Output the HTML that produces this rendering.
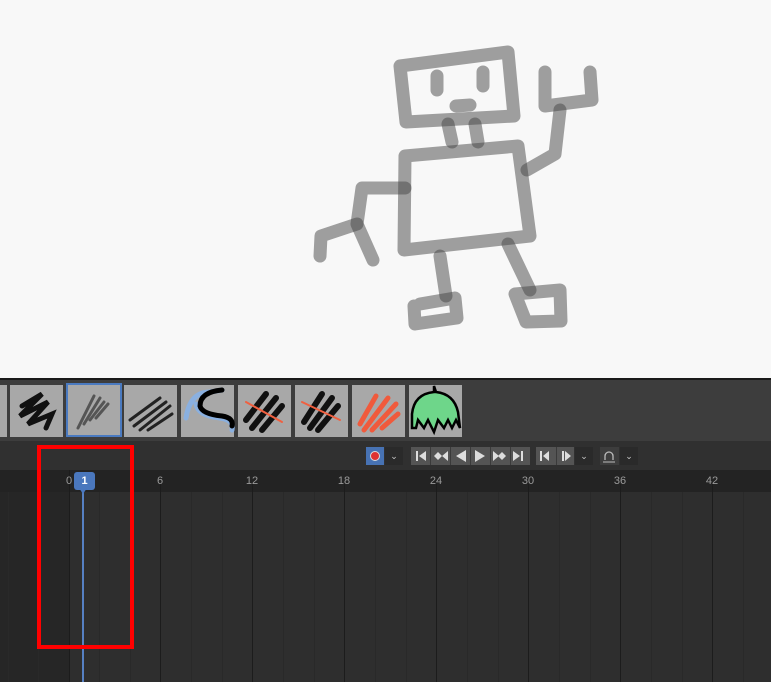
<!DOCTYPE html>
<html><head><style>
body{margin:0;width:771px;height:682px;overflow:hidden;background:#f8f8f8;font-family:"Liberation Sans","DejaVu Sans",sans-serif;position:relative}
.a{position:absolute}
.tile{position:absolute;top:385px;width:53px;height:52px;background:#a8a8a8}
.c{position:absolute;top:447px;height:18px;background:#545454}
.dd{position:absolute;top:447px;height:18px;width:18px;background:#2a2a2a;color:#ccc;font-size:9px;text-align:center;line-height:18px}
.num{position:absolute;top:475px;color:#9a9a9a;font-size:11px;transform:translateX(-50%)}
</style></head><body>
<svg class="a" style="left:0;top:0" width="771" height="380">
<g fill="none" stroke="#444" stroke-opacity="0.5" stroke-width="13" stroke-linecap="round" stroke-linejoin="round">
<path d="M400 66 L508 52 L514 116 L406 122 Z"/>
<path d="M437 76 L437 90 M483 72 L483 86 M456 106 L470 105"/>
<path d="M448 124 L452 142 M475 124 L478 142"/>
<path d="M405 156 L518 146 L530 236 L404 250 Z"/>
<path d="M527 170 L555 154 L560 110"/>
<path d="M545 72 L545 106 L592 100 L590 72"/>
<path d="M405 188 L362 188 L357 224 L373 260"/>
<path d="M357 224 L321 236 L320 256"/>
<path d="M440 256 L446 296"/>
<path d="M414 306 L415 324 L457 318 L455 298 L420 304"/>
<path d="M508 244 L530 290"/>
<path d="M515 294 L560 290 L561 321 L526 322 Z"/>
</g></svg>
<div class="a" style="left:0;top:378px;width:771px;height:2px;background:#1a1a1a"></div>
<div class="a" style="left:0;top:380px;width:771px;height:61px;background:#3d3d3d"></div>
<div class="tile" style="left:0;width:7px"></div>
<div class="tile" style="left:10px"></div>
<div class="tile" style="left:66px;width:52px;height:50px;border:2px solid #4a7ac0;top:383px"></div>
<div class="tile" style="left:124px"></div>
<div class="tile" style="left:181px"></div>
<div class="tile" style="left:238px"></div>
<div class="tile" style="left:295px"></div>
<div class="tile" style="left:352px"></div>
<div class="tile" style="left:409px"></div>
<svg class="a" style="left:0;top:384px" width="470" height="54">
<g fill="none" stroke-linecap="round">
<path d="M22 22 L42 10 L20 32 L48 18 L28 40 L52 30 L46 44" stroke="#111" stroke-width="5"/>
<path d="M78 44 L94 12 M84 40 L100 14 M90 36 L104 18 M96 34 L108 20" stroke="#555" stroke-width="3"/>
<path d="M130 36 L160 14 M134 42 L166 18 M140 46 L170 22 M148 46 L172 30" stroke="#222" stroke-width="3"/>
<path d="M186 34 Q190 8 210 8 L222 6" stroke="#8ab0e0" stroke-width="5"/>
<path d="M196 20 Q198 32 220 34 Q234 36 232 46" stroke="#8ab0e0" stroke-width="5"/>
<path d="M222 6 Q200 8 200 22 Q202 30 222 32 Q234 34 232 42" stroke="#000" stroke-width="5"/>
<path d="M246 36 L266 10 M252 44 L276 14 M262 46 L282 22" stroke="#111" stroke-width="6"/>
<path d="M246 18 L282 38" stroke="#f06040" stroke-width="2"/>
<path d="M304 38 L322 10 M310 44 L332 14 M318 46 L338 22" stroke="#111" stroke-width="6"/>
<path d="M302 18 L340 36" stroke="#f06040" stroke-width="2"/>
<path d="M360 40 L376 12 M364 46 L388 14 M372 46 L396 20 M382 44 L398 30" stroke="#f05a3c" stroke-width="5"/>
</g>
<path d="M434 2 L434 8 Q414 10 412 30 L412 44 L416 44 L418 36 L424 44 L428 36 L434 48 L438 36 L444 44 L448 36 L452 44 L456 36 L460 44 L458 28 Q454 10 436 8 Z" fill="#6ed68a" stroke="#000" stroke-width="2.5"/>
</svg>
<div class="a" style="left:0;top:441px;width:771px;height:29px;background:#303030"></div>
<div class="c" style="left:366px;width:18px;background:#4772b3"><span style="position:absolute;left:4px;top:4px;width:8px;height:8px;border-radius:50%;background:#d33;border:1px solid #ddd"></span></div>
<div class="dd" style="left:385px">⌄</div>
<div class="c" style="left:411px;width:119px"></div>
<div class="c" style="left:536px;width:38px"></div>
<div class="dd" style="left:575px">⌄</div>
<div class="c" style="left:600px;width:19px;background:#3d3d3d"></div>
<div class="dd" style="left:620px">⌄</div>
<svg class="a" style="left:360px;top:447px" width="290" height="18" fill="#ddd">
<path d="M71 9.5v0" stroke="#3a3a3a"/>
<g stroke="#3a3a3a" stroke-width="1"><path d="M70.5 0V18M90.5 0V18M110.5 0V18M130.5 0V18M150.5 0V18M196.5 0V18"/></g>
<rect x="56" y="4" width="2" height="10"/><path d="M66 4L59 9L66 14Z"/>
<path d="M74 9L78 5L82 9L78 13Z"/><path d="M88 4L82 9L88 14Z"/>
<path d="M106 3L96 9L106 15Z"/>
<path d="M115 3L125 9L115 15Z"/>
<path d="M133 4L139 9L133 14Z"/><path d="M138 9L142 5L146 9L142 13Z"/>
<path d="M153 4L160 9L153 14Z"/><rect x="161" y="4" width="2" height="10"/>
<rect x="180" y="4" width="2" height="10"/><path d="M189 4L183 9L189 14Z"/>
<rect x="202" y="4" width="2" height="10"/><path d="M205 4L211 9L205 14Z"/>
<path d="M245 13V9a4 4 0 0 1 8 0v4" fill="none" stroke="#bbb" stroke-width="1.3"/><path d="M243 15h12" stroke="#bbb"/>
</svg>
<div class="a" style="left:0;top:470px;width:771px;height:22px;background:#232323"></div>
<div class="a" style="left:0;top:492px;width:69px;height:190px;background:#262626"></div>
<div class="a" style="left:69px;top:492px;width:702px;height:190px;background:#2e2e2e"></div>
<svg class="a" style="left:0;top:470px" width="771" height="212">
<g stroke="#292929" stroke-width="1">
<path d="M99.5 22V212M130.5 22V212M191.5 22V212M222.5 22V212M283.5 22V212M314.5 22V212M375.5 22V212M406.5 22V212M467.5 22V212M498.5 22V212M559.5 22V212M590.5 22V212M651.5 22V212M682.5 22V212M743.5 22V212M38.5 22V212M8.5 22V212"/>
</g>
<g stroke="#1c1c1c" stroke-width="1">
<path d="M69.5 0V212M160.5 14V212M252.5 14V212M344.5 14V212M436.5 14V212M528.5 14V212M620.5 14V212M712.5 14V212"/>
</g></svg>
<div class="num" style="left:69px">0</div>
<div class="num" style="left:160px">6</div>
<div class="num" style="left:252px">12</div>
<div class="num" style="left:344px">18</div>
<div class="num" style="left:436px">24</div>
<div class="num" style="left:528px">30</div>
<div class="num" style="left:620px">36</div>
<div class="num" style="left:712px">42</div>
<div class="a" style="left:82px;top:488px;width:2px;height:194px;background:#5680c2"></div>
<div class="a" style="left:74px;top:472px;width:21px;height:18px;background:#4a77bd;border-radius:3px;color:#fff;font-size:11px;font-weight:bold;text-align:center;line-height:18px">1</div>
<div class="a" style="left:79px;top:488px;width:0;height:0;border-left:4px solid transparent;border-right:4px solid transparent;border-top:6px solid #4a77bd"></div>
<div class="a" style="left:37px;top:445px;width:89px;height:196px;border:4px solid #f00"></div>
</body></html>
